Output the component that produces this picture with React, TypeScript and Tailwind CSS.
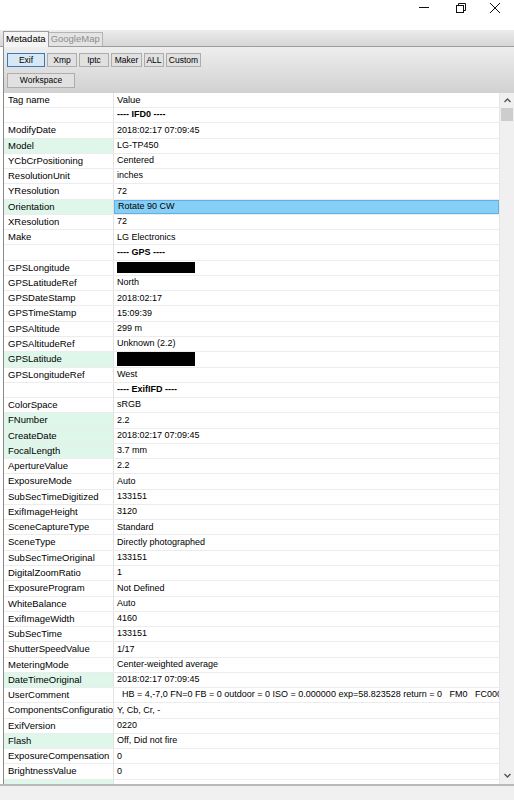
import React from 'react'

type Row = { tag: string; value: string; green?: boolean; section?: boolean; redact?: 'sm' | 'lg'; selected?: boolean }

const rows: Row[] = [
  { tag: '', value: '---- IFD0 ----', section: true },
  { tag: 'ModifyDate', value: '2018:02:17 07:09:45' },
  { tag: 'Model', value: 'LG-TP450', green: true },
  { tag: 'YCbCrPositioning', value: 'Centered' },
  { tag: 'ResolutionUnit', value: 'inches' },
  { tag: 'YResolution', value: '72' },
  { tag: 'Orientation', value: 'Rotate 90 CW', green: true, selected: true },
  { tag: 'XResolution', value: '72' },
  { tag: 'Make', value: 'LG Electronics' },
  { tag: '', value: '---- GPS ----', section: true },
  { tag: 'GPSLongitude', value: '', redact: 'sm' },
  { tag: 'GPSLatitudeRef', value: 'North' },
  { tag: 'GPSDateStamp', value: '2018:02:17' },
  { tag: 'GPSTimeStamp', value: '15:09:39' },
  { tag: 'GPSAltitude', value: '299 m' },
  { tag: 'GPSAltitudeRef', value: 'Unknown (2.2)' },
  { tag: 'GPSLatitude', value: '', green: true, redact: 'lg' },
  { tag: 'GPSLongitudeRef', value: 'West' },
  { tag: '', value: '---- ExifIFD ----', section: true },
  { tag: 'ColorSpace', value: 'sRGB' },
  { tag: 'FNumber', value: '2.2', green: true },
  { tag: 'CreateDate', value: '2018:02:17 07:09:45', green: true },
  { tag: 'FocalLength', value: '3.7 mm', green: true },
  { tag: 'ApertureValue', value: '2.2' },
  { tag: 'ExposureMode', value: 'Auto' },
  { tag: 'SubSecTimeDigitized', value: '133151' },
  { tag: 'ExifImageHeight', value: '3120' },
  { tag: 'SceneCaptureType', value: 'Standard' },
  { tag: 'SceneType', value: 'Directly photographed' },
  { tag: 'SubSecTimeOriginal', value: '133151' },
  { tag: 'DigitalZoomRatio', value: '1' },
  { tag: 'ExposureProgram', value: 'Not Defined' },
  { tag: 'WhiteBalance', value: 'Auto' },
  { tag: 'ExifImageWidth', value: '4160' },
  { tag: 'SubSecTime', value: '133151' },
  { tag: 'ShutterSpeedValue', value: '1/17' },
  { tag: 'MeteringMode', value: 'Center-weighted average' },
  { tag: 'DateTimeOriginal', value: '2018:02:17 07:09:45', green: true },
  { tag: 'UserComment', value: '  HB = 4,-7,0 FN=0 FB = 0 outdoor = 0 ISO = 0.000000 exp=58.823528 return = 0   FM0   FC00000000' },
  { tag: 'ComponentsConfiguration', value: 'Y, Cb, Cr, -' },
  { tag: 'ExifVersion', value: '0220' },
  { tag: 'Flash', value: 'Off, Did not fire', green: true },
  { tag: 'ExposureCompensation', value: '0' },
  { tag: 'BrightnessValue', value: '0' },
  { tag: '', value: '', green: true },
]

const tabs = ['Exif', 'Xmp', 'Iptc', 'Maker', 'ALL', 'Custom']
const tabWidths: Record<string, string> = {
  Exif: 'w-[38px]',
  Xmp: 'w-[30px]',
  Iptc: 'w-[30px]',
  Maker: 'w-[31px]',
  ALL: 'w-[20px]',
  Custom: 'w-[35px]',
}

function WindowControls() {
  return (
    <div className="flex h-[30px] shrink-0 items-start justify-end bg-white pr-[13px] pt-[2px]">
      <svg width="12" height="12" viewBox="0 0 12 12" className="mr-[25px]">
        <path d="M1 5.5h10" stroke="#111" strokeWidth="1" />
      </svg>
      <svg width="12" height="12" viewBox="0 0 12 12" className="mr-[22px]">
        <rect x="1.5" y="3.5" width="7" height="7" fill="none" stroke="#111" />
        <path d="M3.5 3.5V1.5h7v7h-2" fill="none" stroke="#111" />
      </svg>
      <svg width="12" height="12" viewBox="0 0 12 12">
        <path d="M1 1l10 10M11 1L1 11" stroke="#111" strokeWidth="1" />
      </svg>
    </div>
  )
}

export default function App() {
  return (
    <div
      className="flex h-[800px] w-[514px] flex-col overflow-hidden bg-white text-[9px] text-black"
      style={{ fontFamily: '"Liberation Sans", Arial, sans-serif' }}
    >
      <WindowControls />

      {/* tab strip */}
      <div className="flex h-[17px] shrink-0 items-end border-b border-[#9c9c9c] bg-gradient-to-b from-[#ececec] to-[#d6d6d6] pl-[3px] text-[9.5px]">
        <div className="relative z-10 -mb-px flex h-[16px] items-center border border-b-0 border-[#9c9c9c] bg-[#f4f4f4] px-[2px]">
          Metadata
        </div>
        <div className="flex h-[14px] items-center border border-l-0 border-b-0 border-[#b4b4b4] bg-[#e4e4e4] px-[2px] text-[#8c8c8c]">
          GoogleMap
        </div>
      </div>

      <div className="ml-[3px] flex min-h-0 flex-1 flex-col border-l border-[#8a8a8a]">
        {/* button panel */}
        <div className="flex h-[46px] shrink-0 flex-col gap-[6px] bg-gradient-to-b from-[#eeeeee] to-[#d1d1d1] pl-[3px] pt-[6px] text-[8.5px]">
          <div className="flex gap-[2px]">
            {tabs.map((t) => (
              <div
                key={t}
                className={
                  'flex h-[14px] items-center justify-center border ' +
                  tabWidths[t] +
                  (t === 'Exif' ? ' border-[#3d7ab3] bg-[#d6e7f6]' : ' border-[#adadad] bg-[#e1e1e1]')
                }
              >
                {t}
              </div>
            ))}
          </div>
          <div className="flex h-[15px] w-[68px] items-center justify-center border border-[#adadad] bg-[#e1e1e1]">
            Workspace
          </div>
        </div>

        {/* grid */}
        <div className="flex min-h-0 flex-1 overflow-hidden">
          <div className="flex min-w-0 flex-1 flex-col overflow-hidden">
            <div className="flex h-[15px] shrink-0 border-b border-[#ececec] text-[9.5px]">
              <div className="flex w-[110px] items-center border-r border-[#e2e2e2] pl-[4px]">Tag name</div>
              <div className="flex flex-1 items-center pl-[3px]">Value</div>
            </div>
            {rows.map((r, i) => (
              <div key={i} className="flex h-[15.28px] shrink-0 border-b border-[#ececec]">
                <div
                  className={
                    'flex w-[110px] shrink-0 items-center overflow-hidden whitespace-nowrap border-r border-[#e2e2e2] pl-[4px] text-[9.5px] ' +
                    (r.green ? 'bg-[#dff7eb]' : '')
                  }
                >
                  {r.tag}
                </div>
                <div
                  className={
                    'flex min-w-0 flex-1 items-center overflow-hidden whitespace-pre pl-[3px] ' +
                    (r.selected ? 'border border-[#5fb1e6] bg-[#86cff6]' : '') +
                    (r.section ? ' font-bold' : '')
                  }
                >
                  {r.redact === 'sm' && <div className="h-[11px] w-[78px] bg-black" />}
                  {r.redact === 'lg' && <div className="h-[14px] w-[78px] bg-black" />}
                  {r.value}
                </div>
              </div>
            ))}
          </div>

          {/* scrollbar */}
          <div className="flex w-[15px] shrink-0 flex-col items-center border-l border-[#e6e6e6] bg-[#f0f0f0]">
            <svg width="9" height="15" viewBox="0 0 9 15" className="shrink-0">
              <path d="M1.5 9l3-3 3 3" fill="none" stroke="#555" strokeWidth="1.4" />
            </svg>
            <div className="h-[13px] w-[12px] shrink-0 bg-[#cdcdcd]" />
            <div className="flex-1" />
            <svg width="9" height="15" viewBox="0 0 9 15" className="shrink-0">
              <path d="M1.5 5l3 3 3-3" fill="none" stroke="#555" strokeWidth="1.4" />
            </svg>
          </div>
        </div>
      </div>

      <div className="h-[2px] shrink-0 bg-[#b9b9b9]" />
      <div className="h-[14px] shrink-0 bg-[#f0f0f0]" />
    </div>
  )
}
